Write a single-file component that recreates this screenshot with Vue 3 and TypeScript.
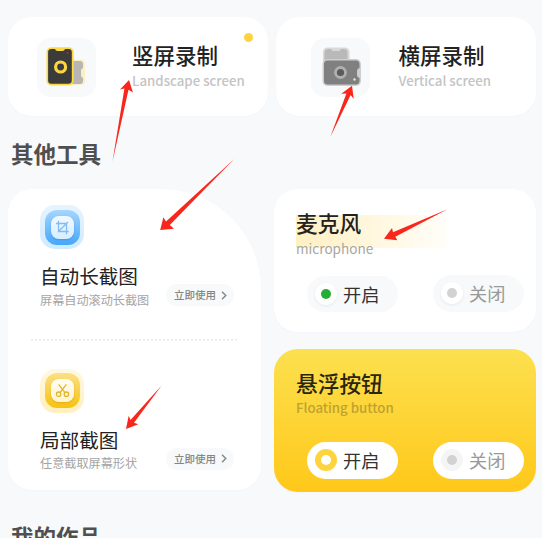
<script setup lang="ts">
interface Tool {
  id: string
  title: string
  note: string
}

interface Panel {
  id: string
  title: string
  subtitle: string
}

const tools: Tool[] = [
  { id: 'crop', title: '自动长截图', note: '屏幕自动滚动长截图' },
  { id: 'cut', title: '局部截图', note: '任意截取屏幕形状' },
]

const panels: Panel[] = [
  { id: 'mic', title: '麦克风', subtitle: 'microphone' },
  { id: 'float', title: '悬浮按钮', subtitle: 'Floating button' },
]

const arrows: string[] = [
  '129,80 120,89.5 124.4,88.6 112.4,162 128.5,89.8 133,92.6',
  '352,85.7 341.3,93.7 346.4,93.4 330.3,137 350.6,95 353.7,99',
  '160.2,230 163.4,217.3 166,221.4 234.5,158.7 169.8,225 174,228.7',
  '384,238.8 392,228 393,232.3 447.5,209.3 395.3,236.7 397.3,240.3',
  '126,429 128.7,415.7 130.5,420 161.8,385.3 134,422.7 138.3,424.3',
]
</script>

<template>
  <main class="page">
    <div class="modes">
      <section class="mode">
        <div class="tile">
          <svg width="59" height="59" viewBox="0 0 59 59">
            <rect x="32" y="21.5" width="16" height="25.5" rx="4" fill="#fdf0c0" />
            <path d="M33 23h10q3 0 3 3v4q-2 .6-2 2.5v5q0 1.900 2 2.500v3q0 3-3 3H33z" fill="#b8b6b4" />
            <rect x="9.500" y="9.200" width="27.200" height="38.300" rx="5" fill="#fbd945" />
            <path d="M14.500 11H18q.5 2 2.500 2h5q2 0 2.500-2h3.500q3.300 0 3.300 3.300v28q0 3.500-3.500 3.500h-17q-3.200 0-3.200-3.500V14.300q0-3.300 3.400-3.300z" fill="#3b3b3a" />
            <circle cx="23.600" cy="29" r="5" fill="none" stroke="#fbd641" stroke-width="3.200" />
            <circle cx="30.500" cy="15" r="1.100" fill="#a92c35" />
          </svg>
        </div>
        <div class="words">
          <h2 class="title">竖屏录制</h2>
          <p class="sub">Landscape screen</p>
        </div>
        <i class="badge"></i>
      </section>
      <section class="mode">
        <div class="tile">
          <svg width="59" height="59" viewBox="0 0 59 59">
            <rect x="12" y="9.500" width="26.500" height="20" rx="4.500" fill="#d8d8d8" />
            <path d="M17 11h3q.5 2 2.500 2h5q2 0 2.500-2h3q3.500 0 3.500 3.500V23h-23v-8.500Q13.500 11 17 11z" fill="#b9b9b9" />
            <rect x="11.500" y="21" width="38.500" height="27" rx="5" fill="#cfcfcf" />
            <path d="M16.500 22.500h28.500q3.500 0 3.500 3.500v4q-2.500.7-2.500 3v4q0 2.300 2.500 3v2.500q0 4-3.500 4H16.500q-3.500 0-3.500-3.500V26q0-3.500 3.500-3.500z" fill="#808080" />
            <circle cx="29.500" cy="34.500" r="5" fill="#5b5b5b" stroke="#b0b0b0" stroke-width="2.800" />
            <circle cx="43.500" cy="41.500" r="1.200" fill="#e4e4e4" />
          </svg>
        </div>
        <div class="words">
          <h2 class="title">横屏录制</h2>
          <p class="sub">Vertical screen</p>
        </div>
      </section>
    </div>

    <h1 class="heading">其他工具</h1>

    <div class="board">
      <section class="tools">
        <article v-for="tool in tools" :key="tool.id" class="tool">
          <div class="halo" :class="tool.id">
            <div class="core">
              <div class="glyph">
                <svg v-if="tool.id === 'crop'" width="15" height="15" viewBox="0 0 15 15" fill="none" stroke="#7fbdf2" stroke-width="1.300">
                  <path d="M3.500.8v10.700h10.200M1 3.500h10.500v10.700M3.700 11.300 13 2" />
                </svg>
                <svg v-else width="15" height="15" viewBox="0 0 15 15" fill="none" stroke="#e2b62c" stroke-width="1.300">
                  <circle cx="3.600" cy="11.200" r="2.200" />
                  <circle cx="11.400" cy="11.200" r="2.200" />
                  <path d="M3.600 1.300 10 9.600M11.400 1.300 5 9.600" />
                </svg>
              </div>
            </div>
          </div>
          <div class="row">
            <div>
              <h2 class="name">{{ tool.title }}</h2>
              <p class="note">{{ tool.note }}</p>
            </div>
            <button class="use">
              立即使用
              <svg width="6" height="9" viewBox="0 0 6 9" fill="none" stroke="#858585" stroke-width="1.400">
                <path d="M1 .8 4.800 4.500 1 8.200" />
              </svg>
            </button>
          </div>
        </article>
      </section>

      <div class="panels">
        <section v-for="panel in panels" :key="panel.id" class="panel" :class="panel.id">
          <div class="label">
            <h2 class="title">{{ panel.title }}</h2>
            <p class="sub">{{ panel.subtitle }}</p>
          </div>
          <div class="switches">
            <button class="pill on"><span class="knob"><i></i></span>开启</button>
            <button class="pill off"><span class="knob"><i></i></span>关闭</button>
          </div>
        </section>
      </div>
    </div>

    <h1 class="heading works">我的作品</h1>

    <svg class="arrows" width="542" height="538" viewBox="0 0 542 538">
      <polygon v-for="points in arrows" :key="points" :points="points" fill="#f9261b" />
    </svg>
  </main>
</template>

<style>
body {
  margin: 0;
  background: #f7f9fb;
  overflow: hidden;
}
</style>

<style scoped>
.page {
  position: relative;
  box-sizing: border-box;
  width: 542px;
  height: 538px;
  padding: 17px 6px 0 8px;
  overflow: hidden;
  background: #f7f9fb;
  font-family: "Noto Sans CJK SC", sans-serif;
  color: #222;
}
h1, h2, p {
  margin: 0;
}
button {
  border: 0;
  padding: 0;
  font-family: inherit;
}
.modes {
  display: grid;
  grid-template-columns: 260px 260px;
  gap: 8px;
}
.mode {
  position: relative;
  box-sizing: border-box;
  display: flex;
  height: 99px;
  padding: 20.5px 0 0 29px;
  border-radius: 24px;
  background: #fff;
  box-shadow: 0 1px 3px rgba(40, 60, 80, 0.02);
}
.mode + .mode {
  padding-left: 35px;
}
.tile {
  width: 59px;
  height: 59px;
  border-radius: 14px;
  background: #f7f9fb;
}
.tile svg {
  display: block;
}
.words {
  padding: 4px 0 0 36px;
}
.mode + .mode .words {
  padding-left: 28.500px;
}
.title {
  font-size: 21.500px;
  line-height: 26px;
  font-weight: 500;
  white-space: nowrap;
}
.sub {
  font-size: 13.250px;
  font-weight: 500;
  line-height: 22px;
  color: #c4c4c4;
  white-space: nowrap;
  margin-top: 2px;
}
.badge {
  position: absolute;
  left: 235.500px;
  top: 15.500px;
  width: 9px;
  height: 9px;
  border-radius: 50%;
  background: #fdd440;
}
.heading {
  margin: 22px 0 0 3px;
  font-size: 22.500px;
  line-height: 30px;
  font-weight: 700;
  color: #4f4f4f;
}
.board {
  display: flex;
  gap: 12.500px;
  margin-top: 21px;
}
.tools {
  box-sizing: border-box;
  width: 253px;
  height: 301px;
  padding: 16px 22px 0 23px;
  border-radius: 24px 100px 24px 24px;
  background: #fff;
  box-shadow: 0 1px 3px rgba(40, 60, 80, 0.02);
}
.tool {
  padding: 0 5px 0 9px;
}
.tool + .tool {
  margin-top: 29px;
  padding-top: 30px;
  background: repeating-linear-gradient(90deg, #e8e8e8 0 2.500px, transparent 2.500px 4px) top / 100% 1.500px no-repeat;
}
.halo {
  box-sizing: border-box;
  width: 44px;
  height: 44px;
  padding: 4.500px;
  border-radius: 15px;
}
.core {
  box-sizing: border-box;
  width: 35px;
  height: 35px;
  padding: 6px;
  border-radius: 12px;
}
.glyph {
  display: flex;
  align-items: center;
  justify-content: center;
  width: 23px;
  height: 23px;
  border-radius: 8px;
}
.crop {
  background: linear-gradient(#e6f4ff, #cfeaff);
}
.crop .core {
  background: linear-gradient(#a6d6fe, #45a8fb);
}
.crop .glyph {
  background: linear-gradient(#f2f9ff, #d8edff);
  box-shadow: 0 1px 2px rgba(20, 100, 190, 0.3);
}
.cut {
  background: linear-gradient(#fff9e2, #fff0bf);
}
.cut .core {
  background: linear-gradient(#fbe088, #f8c20d);
}
.cut .glyph {
  background: linear-gradient(#fffdf4, #fff4d0);
  box-shadow: 0 1px 2px rgba(180, 130, 0, 0.35);
}
.row {
  display: flex;
  justify-content: space-between;
  align-items: flex-end;
  margin-top: 14px;
}
.name {
  font-size: 19.600px;
  line-height: 26px;
  font-weight: 400;
  white-space: nowrap;
}
.note {
  font-size: 12.150px;
  line-height: 20px;
  margin-top: 0.500px;
  color: #a5a5a5;
  white-space: nowrap;
}
.use {
  box-sizing: border-box;
  display: flex;
  align-items: center;
  gap: 5px;
  width: 68px;
  height: 22px;
  margin-bottom: 3.500px;
  padding: 0 0 0 8px;
  border-radius: 11px;
  background: #f7f9fb;
  font-size: 10.500px;
  font-weight: 500;
  line-height: 20px;
  color: #858585;
  white-space: nowrap;
}
.panels {
  display: flex;
  flex-direction: column;
  gap: 17px;
}
.panel {
  box-sizing: border-box;
  width: 262px;
  height: 143px;
  padding: 21px 12px 0 22.500px;
  border-radius: 24px;
  background: #fff;
  box-shadow: 0 1px 3px rgba(40, 60, 80, 0.02);
}
.float {
  background: linear-gradient(#fce04f, #ffc81a);
}
.label {
  height: 47px;
}
.panel .title {
  font-size: 21.700px;
}
.panel .sub {
  margin-top: 1px;
}
.mic .label {
  background: linear-gradient(90deg, #fff0c2, rgba(255, 248, 225, 0.2)) 0 5px / 151px 33px no-repeat;
}
.mic .sub {
  font-size: 13.600px;
  font-weight: 400;
  color: #a9a69b;
}
.float .sub {
  color: #bda233;
}
.float .title {
  color: #29250f;
}
.switches {
  display: flex;
  justify-content: space-between;
  margin: 18.500px 0 0 10.500px;
}
.float .switches {
  margin-top: 25px;
}
.pill {
  box-sizing: border-box;
  display: flex;
  align-items: center;
  gap: 6.500px;
  width: 91px;
  height: 36.500px;
  padding: 0 0 0 8px;
  border-radius: 19px;
  background: #f7f9fb;
  font-size: 18.200px;
  line-height: 26px;
  color: #333;
  white-space: nowrap;
}
.off {
  color: #999;
}
.mic .off {
  margin-top: -0.500px;
}
.float .pill {
  background: #fff;
}
.knob {
  display: flex;
  align-items: center;
  justify-content: center;
  width: 22px;
  height: 22px;
  border-radius: 50%;
  background: #fff;
  box-shadow: 0 1px 3px rgba(40, 60, 80, 0.08);
}
.knob i {
  width: 10px;
  height: 10px;
  border-radius: 50%;
  background: #25ae34;
}
.off .knob i {
  background: #d2d2d2;
}
.float .knob {
  background: #f5f5f5;
  box-shadow: none;
}
.float .on .knob {
  background: #fdd43d;
}
.float .on .knob i {
  background: #fff;
}
.works {
  margin-top: 29px;
}
.arrows {
  position: absolute;
  left: 0;
  top: 0;
}
</style>
